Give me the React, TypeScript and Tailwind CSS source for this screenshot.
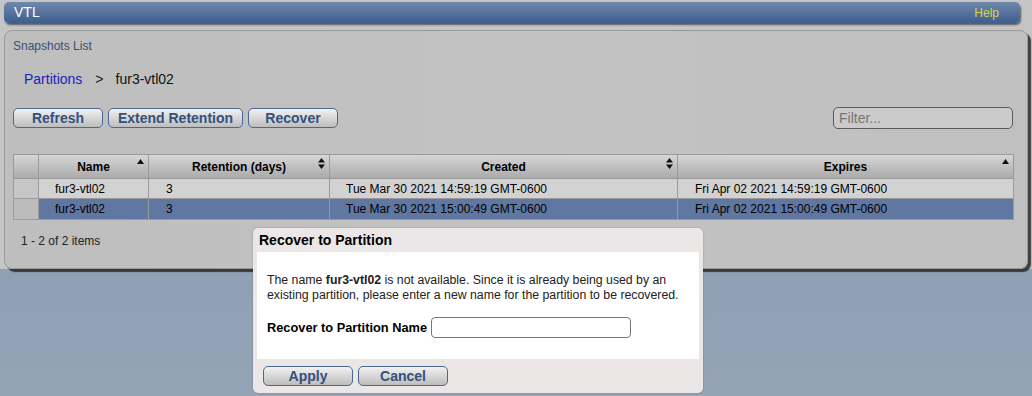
import React from 'react';

const SortUp = () => (
  <svg width="7" height="5" viewBox="0 0 7 5" className="absolute right-[4px] top-[4px]">
    <path d="M3.5 0 L7 5 L0 5 Z" fill="#111" />
  </svg>
);

const SortBoth = () => (
  <svg width="7" height="11" viewBox="0 0 7 11" className="absolute right-[4px] top-[3px]">
    <path d="M3.5 0 L7 4.5 L0 4.5 Z M0 6.5 L7 6.5 L3.5 11 Z" fill="#111" />
  </svg>
);

const Btn = ({ label, w }: { label: string; w: string }) => (
  <button
    className={`${w} h-[20px] rounded-[5px] border border-[#4a6890] bg-gradient-to-b from-[#f2f2f2] to-[#bdbdbd] text-[14px] font-bold leading-none text-[#34507c]`}
  >
    {label}
  </button>
);

const rows = [
  { name: 'fur3-vtl02', ret: '3', created: 'Tue Mar 30 2021 14:59:19 GMT-0600', expires: 'Fri Apr 02 2021 14:59:19 GMT-0600', sel: false },
  { name: 'fur3-vtl02', ret: '3', created: 'Tue Mar 30 2021 15:00:49 GMT-0600', expires: 'Fri Apr 02 2021 15:00:49 GMT-0600', sel: true },
];

export default function App() {
  return (
    <div
      className="relative w-[1032px] h-[396px] overflow-hidden bg-gradient-to-b from-[#8698b2] to-[#95a3b6] text-black"
      style={{ fontFamily: '"Liberation Sans", Arial, sans-serif' }}
    >
      {/* top gray area with title bar and panel */}
      <div className="bg-[#c5c5c5] pt-[2px] pl-[4px] pr-[1px] flex flex-col gap-[7px]">
        <div className="mr-[11px] h-[21px] rounded-[5px] bg-gradient-to-b from-[#7089ad] to-[#3d5e8f] shadow-[1px_2px_2px_rgba(0,0,0,0.55)] flex items-center justify-between pl-[10px] pr-[21px]">
          <span className="text-[14px] text-white">VTL</span>
          <span className="text-[12px] text-[#d6d83a]">Help</span>
        </div>

        <div className="h-[239px] rounded-[8px] border border-[#9a9a9a] bg-gradient-to-r from-[#bebebe] via-[#c2c2c2] to-[#c0c0c0] shadow-[3px_3px_1px_rgba(40,40,40,0.85)] mr-[3px] flex flex-col px-[8px]">
          <div className="pt-[6px] text-[12px] text-[#3c4d70]">Snapshots List</div>

          <div className="mt-[14px] pl-[11px] flex items-center text-[14px]">
            <span className="text-[#2222bb]">Partitions</span>
            <span className="ml-[13px] text-[#222]">&gt;</span>
            <span className="ml-[12px] text-[#111]">fur3-vtl02</span>
          </div>

          <div className="mt-[17px] flex items-center">
            <div className="flex gap-[5px]">
              <Btn label="Refresh" w="w-[90px]" />
              <Btn label="Extend Retention" w="w-[135px]" />
              <Btn label="Recover" w="w-[90px]" />
            </div>
            <input
              placeholder="Filter..."
              className="ml-auto mr-[6px] w-[180px] h-[22px] rounded-[5px] border border-[#5a5a5a] bg-[#cbcbcb] px-[5px] text-[14px] text-[#333] placeholder:text-[#777] outline-none"
            />
          </div>

          <table className="mt-[25px] w-[1000px] border-collapse text-[12px] table-fixed">
            <colgroup>
              <col className="w-[25px]" />
              <col className="w-[110px]" />
              <col className="w-[181px]" />
              <col className="w-[348px]" />
              <col className="w-[336px]" />
            </colgroup>
            <thead>
              <tr className="h-[24px] bg-gradient-to-b from-[#d6d6d6] to-[#a9a9a9]">
                <th className="border border-[#9a9a9a]"></th>
                <th className="relative border border-[#9a9a9a] font-bold">Name<SortUp /></th>
                <th className="relative border border-[#9a9a9a] font-bold">Retention (days)<SortBoth /></th>
                <th className="relative border border-[#9a9a9a] font-bold">Created<SortBoth /></th>
                <th className="relative border border-[#9a9a9a] font-bold">Expires<SortUp /></th>
              </tr>
            </thead>
            <tbody>
              {rows.map((r, i) => (
                <tr key={i} className={`${r.sel ? 'h-[21px] bg-[#5f77a1]' : 'h-[20px] bg-[#d2d2d2]'}`}>
                  <td className={`border border-[#9a9a9a] ${r.sel ? 'bg-[#bcbcbc]' : 'bg-[#c6c6c6]'}`}></td>
                  <td className="border border-[#9a9a9a] pl-[16px]">{r.name}</td>
                  <td className="border border-[#9a9a9a] pl-[17px]">{r.ret}</td>
                  <td className="border border-[#9a9a9a] pl-[16px]">{r.created}</td>
                  <td className="border border-[#9a9a9a] pl-[17px]">{r.expires}</td>
                </tr>
              ))}
            </tbody>
          </table>

          <div className="mt-[12px] pl-[8px] text-[12px] text-[#222]">1 - 2 of 2 items</div>
        </div>
      </div>

      {/* dialog */}
      <div className="absolute left-[253px] top-[228px] w-[450px] h-[165px] rounded-[5px] bg-[#ebe7e6] flex flex-col px-[4px] shadow-[0_0_2px_rgba(0,0,0,0.25)]">
        <div className="h-[24px] flex items-center pl-[2px] text-[14px] font-bold">Recover to Partition</div>
        <div className="h-[107px] bg-white pl-[10px] pr-[4px] pt-[21px] text-[12.3px] leading-[15px] text-[#222]">
          <p>
            The name <b>fur3-vtl02</b> is not available. Since it is already being used by an existing partition, please enter a new name for the partition to be recovered.
          </p>
          <div className="mt-[14px] flex items-center gap-[4px]">
            <span className="text-[12.8px] font-bold text-black">Recover to Partition Name</span>
            <input className="w-[200px] h-[21px] rounded-[4px] border border-[#777] bg-white outline-none" />
          </div>
        </div>
        <div className="flex gap-[5px] pl-[6px] pt-[7px]">
          <Btn label="Apply" w="w-[90px]" />
          <Btn label="Cancel" w="w-[90px]" />
        </div>
      </div>
    </div>
  );
}
